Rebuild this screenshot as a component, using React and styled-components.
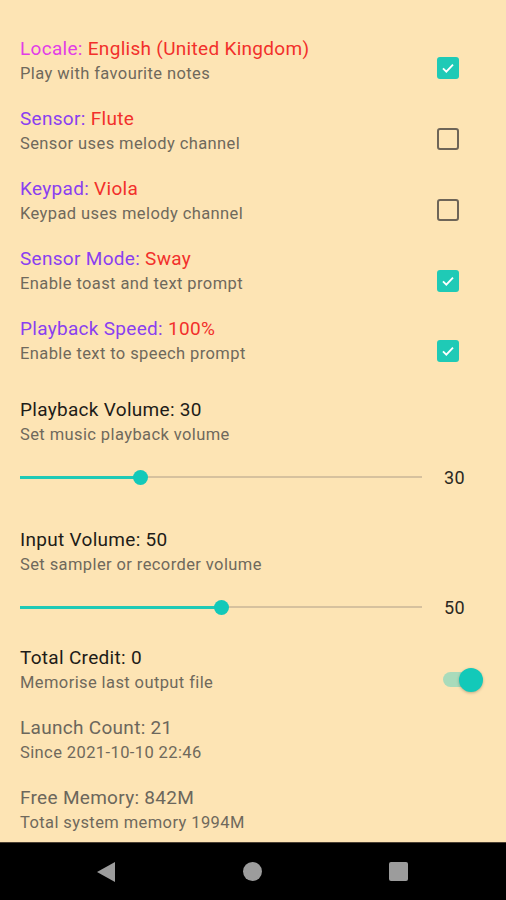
import React from 'react';
import styled, { createGlobalStyle } from 'styled-components';

const GlobalStyle = createGlobalStyle`
  html, body {
    margin: 0;
    padding: 0;
    background: #fde4b4;
  }
  body {
    font-family: Roboto, 'Noto Sans', sans-serif;
  }
`;

const Screen = styled.div`
  width: 506px;
  height: 900px;
  display: flex;
  flex-direction: column;
  background: #fde4b4;
  overflow: hidden;
`;

const Content = styled.div`
  flex: 1;
  padding-top: 36px;
  overflow: hidden;
`;

const Row = styled.div`
  display: flex;
  align-items: flex-start;
  padding: 0 23px 0 20px;
  margin-top: ${(p) => p.gap || 0}px;
  height: 50px;
`;

const Texts = styled.div`
  flex: 1;
  min-width: 0;
`;

const Title = styled.div`
  font-size: 19px;
  letter-spacing: 0.3px;
  line-height: 26px;
  color: ${(p) => p.color || '#1e1c18'};
  white-space: nowrap;
`;

const Label = styled.span`
  color: ${(p) => p.color};
`;

const Subtitle = styled.div`
  font-size: 16.5px;
  letter-spacing: 0.4px;
  line-height: 24px;
  color: #6f695c;
  white-space: nowrap;
`;

const Box = styled.span`
  width: 22px;
  height: 22px;
  margin-top: ${(p) => p.top || 21}px;
  margin-right: 24px;
  box-sizing: border-box;
  border-radius: 3px;
  display: flex;
  align-items: center;
  justify-content: center;
  background: ${(p) => (p.checked ? '#1fcab6' : 'transparent')};
  border: ${(p) => (p.checked ? 'none' : '2.5px solid #6e6558')};
`;

const SliderRow = styled.div`
  display: flex;
  align-items: center;
  height: 48px;
  padding: 0 36px 0 20px;
  margin-top: 6px;
`;

const Track = styled.div`
  position: relative;
  flex: 1;
  height: 2px;
  background: #d6c19e;
  margin-right: 22px;
`;

const Fill = styled.div`
  height: 3px;
  margin-top: -0.5px;
  background: #1fcab6;
`;

const Thumb = styled.span`
  position: absolute;
  top: 50%;
  width: 15px;
  height: 15px;
  margin: -7.5px 0 0 -7.5px;
  border-radius: 50%;
  background: #13c9b9;
`;

const Value = styled.span`
  font-size: 18px;
  letter-spacing: 0.5px;
  color: #2b2822;
  width: 26px;
`;

const Switch = styled.span`
  position: relative;
  width: 32px;
  height: 15px;
  margin-top: 27px;
  margin-right: 8px;
  border-radius: 8px;
  background: #a9dbbb;
`;

const Knob = styled.span`
  position: absolute;
  right: -8px;
  top: -4.5px;
  width: 24px;
  height: 24px;
  border-radius: 50%;
  background: #13c9b9;
  box-shadow: 0 1px 3px rgba(0, 0, 0, 0.25);
`;

const NavBar = styled.div`
  height: 58px;
  background: #000;
  border-top: 1px solid #4a3f33;
  box-sizing: border-box;
  display: flex;
  align-items: center;
  justify-content: space-between;
  padding: 0 98px 0 97px;
`;

const NavIcon = styled.svg`
  display: block;
  fill: #9c9c9c;
`;

function CheckBox({ checked, top }) {
  return (
    <Box checked={checked} top={top}>
      {checked && (
        <svg width="16" height="16" viewBox="0 0 24 24">
          <path d="M4.5 12.5l5 5 10-10.5" fill="none" stroke="#fff" strokeWidth="2.8" />
        </svg>
      )}
    </Box>
  );
}

function Slider({ value }) {
  return (
    <SliderRow>
      <Track>
        <Fill style={{ width: `${value}%` }} />
        <Thumb style={{ left: `${value}%` }} />
      </Track>
      <Value>{value}</Value>
    </SliderRow>
  );
}

const choices = [
  { label: 'Locale:', value: 'English (United Kingdom)', labelColor: '#e23ee6', sub: 'Play with favourite notes', checked: true, top: 21 },
  { label: 'Sensor:', value: 'Flute', labelColor: '#8a3ff0', sub: 'Sensor uses melody channel', checked: false, top: 22 },
  { label: 'Keypad:', value: 'Viola', labelColor: '#8a3ff0', sub: 'Keypad uses melody channel', checked: false, top: 23 },
  { label: 'Sensor Mode:', value: 'Sway', labelColor: '#8a3ff0', sub: 'Enable toast and text prompt', checked: true, top: 24 },
  { label: 'Playback Speed:', value: '100%', labelColor: '#8a3ff0', sub: 'Enable text to speech prompt', checked: true, top: 24 },
];

export default function App() {
  return (
    <Screen>
      <GlobalStyle />
      <Content>
        {choices.map((c, i) => (
          <Row key={c.label} gap={i === 0 ? 0 : 20}>
            <Texts>
              <Title>
                <Label color={c.labelColor}>{c.label}</Label> <Label color="#f2302b">{c.value}</Label>
              </Title>
              <Subtitle>{c.sub}</Subtitle>
            </Texts>
            <CheckBox checked={c.checked} top={c.top} />
          </Row>
        ))}

        <Row gap={31}>
          <Texts>
            <Title>Playback Volume: 30</Title>
            <Subtitle>Set music playback volume</Subtitle>
          </Texts>
        </Row>
        <Slider value={30} />

        <Row gap={26}>
          <Texts>
            <Title>Input Volume: 50</Title>
            <Subtitle>Set sampler or recorder volume</Subtitle>
          </Texts>
        </Row>
        <Slider value={50} />

        <Row gap={14}>
          <Texts>
            <Title>Total Credit: 0</Title>
            <Subtitle>Memorise last output file</Subtitle>
          </Texts>
          <Switch>
            <Knob />
          </Switch>
        </Row>

        <Row gap={20}>
          <Texts>
            <Title color="#6c675c">Launch Count: 21</Title>
            <Subtitle>Since 2021-10-10 22:46</Subtitle>
          </Texts>
        </Row>

        <Row gap={20}>
          <Texts>
            <Title color="#6c675c">Free Memory: 842M</Title>
            <Subtitle>Total system memory 1994M</Subtitle>
          </Texts>
        </Row>
      </Content>

      <NavBar>
        <NavIcon width="18" height="20" viewBox="0 0 18 20">
          <path d="M18 0v20L0 10z" />
        </NavIcon>
        <NavIcon width="19" height="19" viewBox="0 0 19 19">
          <circle cx="9.5" cy="9.5" r="9.5" />
        </NavIcon>
        <NavIcon width="19" height="19" viewBox="0 0 19 19">
          <rect width="19" height="19" rx="2" />
        </NavIcon>
      </NavBar>
    </Screen>
  );
}
